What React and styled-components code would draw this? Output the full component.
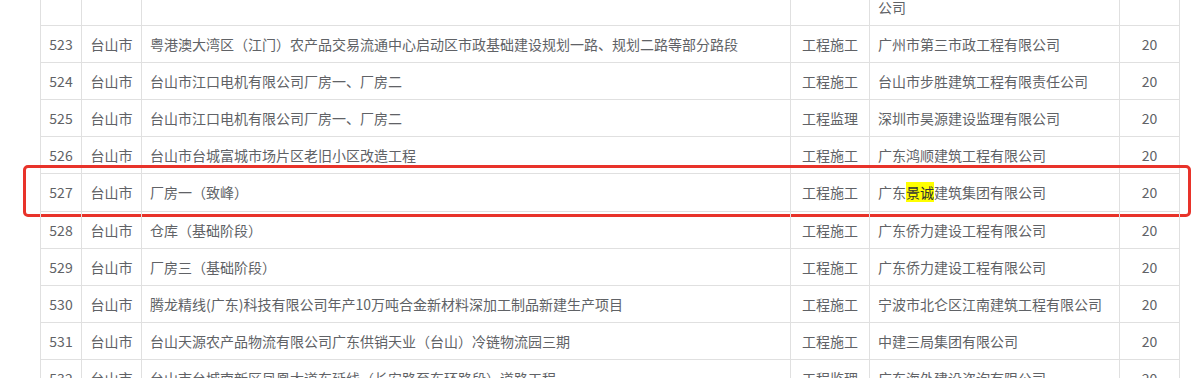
import React from 'react';
import styled, { createGlobalStyle } from 'styled-components';

const GlobalStyle = createGlobalStyle`
  html, body { margin: 0; padding: 0; background: #fff; }
  body { font-family: "Noto Sans CJK SC", "Microsoft YaHei", sans-serif; }
`;

const Viewport = styled.div`
  width: 1202px;
  height: 378px;
  overflow: hidden;
  background: #fff;
`;

const Table = styled.div`
  margin: -51.33px 0 0 40px;
  width: 1140px;
  display: flex;
  flex-direction: column;
`;

const Row = styled.div`
  position: relative;
  display: grid;
  grid-template-columns: 41px 60px 649px 79px 250px 60px;
  border-right: 1px solid #e0e0e0;
`;

const Cell = styled.div`
  border-left: 1px solid #e0e0e0;
  border-bottom: 1px solid #e0e0e0;
  padding: 8px;
  line-height: 20.11px;
  font-size: 14px;
  color: #606266;
  display: flex;
  align-items: center;
  justify-content: ${(p) => (p.$center ? 'center' : 'flex-start')};
  text-align: ${(p) => (p.$center ? 'center' : 'left')};
  white-space: ${(p) => (p.$center ? 'nowrap' : 'normal')};
  min-width: 0;
`;

const Hit = styled.mark`
  background: #ffff00;
  color: #303133;
  padding: 0;
`;

const Mark = styled.div`
  position: absolute;
  top: -9px;
  bottom: -5px;
  left: -17px;
  right: -12px;
  border: 3px solid #e8332a;
  border-radius: 5px;
  pointer-events: none;
`;

const rows = [
  { no: 522, city: '台山市', name: '台山市水步镇农村生活污水治理工程', type: '工程施工', company: '广东省建筑工程集团控股有限公司、台山市第二建筑工程勘察设计院有限公司', score: 20 },
  { no: 523, city: '台山市', name: '粤港澳大湾区（江门）农产品交易流通中心启动区市政基础建设规划一路、规划二路等部分路段', type: '工程施工', company: '广州市第三市政工程有限公司', score: 20 },
  { no: 524, city: '台山市', name: '台山市江口电机有限公司厂房一、厂房二', type: '工程施工', company: '台山市步胜建筑工程有限责任公司', score: 20 },
  { no: 525, city: '台山市', name: '台山市江口电机有限公司厂房一、厂房二', type: '工程监理', company: '深圳市昊源建设监理有限公司', score: 20 },
  { no: 526, city: '台山市', name: '台山市台城富城市场片区老旧小区改造工程', type: '工程施工', company: '广东鸿顺建筑工程有限公司', score: 20 },
  { no: 527, city: '台山市', name: '厂房一（致峰）', type: '工程施工', company: ['广东', '景诚', '建筑集团有限公司'], score: 20, marked: true },
  { no: 528, city: '台山市', name: '仓库（基础阶段）', type: '工程施工', company: '广东侨力建设工程有限公司', score: 20 },
  { no: 529, city: '台山市', name: '厂房三（基础阶段）', type: '工程施工', company: '广东侨力建设工程有限公司', score: 20 },
  { no: 530, city: '台山市', name: '腾龙精线(广东)科技有限公司年产10万吨合金新材料深加工制品新建生产项目', type: '工程施工', company: '宁波市北仑区江南建筑工程有限公司', score: 20 },
  { no: 531, city: '台山市', name: '台山天源农产品物流有限公司广东供销天业（台山）冷链物流园三期', type: '工程施工', company: '中建三局集团有限公司', score: 20 },
  { no: 532, city: '台山市', name: '台山市台城南新区凤凰大道东延线（长安路至东环路段）道路工程', type: '工程监理', company: '广东海外建设咨询有限公司', score: 20 },
];

export default function App() {
  return (
    <>
      <GlobalStyle />
      <Viewport>
        <Table>
          {rows.map((r) => (
            <Row key={r.no}>
              <Cell $center>{r.no}</Cell>
              <Cell $center>{r.city}</Cell>
              <Cell>{r.name}</Cell>
              <Cell $center>{r.type}</Cell>
              <Cell>
                {Array.isArray(r.company) ? (
                  <span>
                    {r.company[0]}
                    <Hit>{r.company[1]}</Hit>
                    {r.company[2]}
                  </span>
                ) : (
                  r.company
                )}
              </Cell>
              <Cell $center>{r.score}</Cell>
              {r.marked && <Mark />}
            </Row>
          ))}
        </Table>
      </Viewport>
    </>
  );
}
